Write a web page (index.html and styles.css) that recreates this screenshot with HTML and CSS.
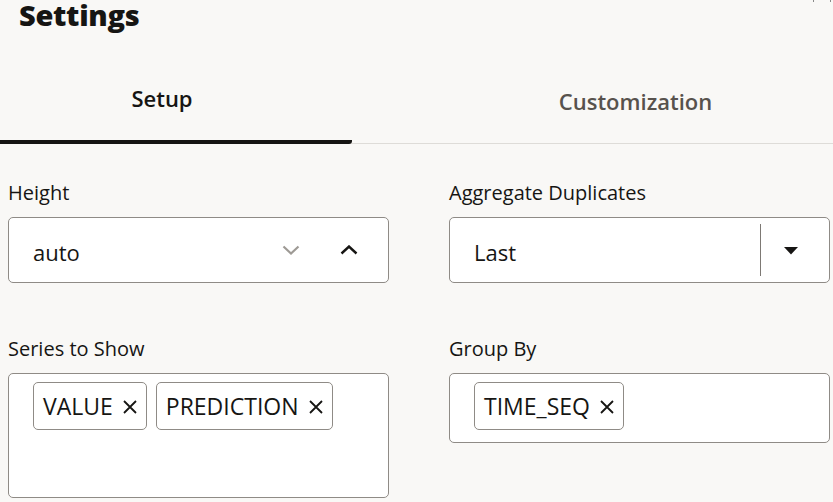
FILE: index.html
```html
<!DOCTYPE html>
<html lang="en">
<head>
    <meta name="viewport" content="width=device-width,initial-scale=1.0">
    <title>Settings</title>
    <link rel="stylesheet" href="styles.css">
</head>

<body>
    <div class="panel">
        <div class="panel-header">
            <h1 class="title">Settings</h1>
            <span class="close-mark"></span>
        </div>

        <div class="tabs">
            <div class="tab tab-setup active">Setup</div>
            <div class="tab tab-custom">Customization</div>
        </div>

        <div class="form-grid">
            <div class="field">
                <label class="field-label">Height</label>
                <div class="control">
                    <span class="control-value">auto</span>
                    <span class="spin">
                        <svg class="spin-icon muted" width="18" height="10" viewBox="0 0 18 10">
                            <path d="M1.5 1.5 L9 8.5 L16.5 1.5" fill="none" stroke="currentColor" stroke-width="2.2"/>
                        </svg>
                        <svg class="spin-icon" width="18" height="10" viewBox="0 0 18 10">
                            <path d="M1.5 8.5 L9 1.5 L16.5 8.5" fill="none" stroke="currentColor" stroke-width="2.4"/>
                        </svg>
                    </span>
                </div>
            </div>

            <div class="field">
                <label class="field-label">Aggregate Duplicates</label>
                <div class="control">
                    <span class="control-value">Last</span>
                    <span class="select-divider"></span>
                    <span class="caret">
                        <svg width="14" height="8" viewBox="0 0 14 8">
                            <path d="M0 0 H14 L7 7.5 Z" fill="currentColor"/>
                        </svg>
                    </span>
                </div>
            </div>

            <div class="field">
                <label class="field-label">Series to Show</label>
                <div class="control chips tall">
                    <span class="chip">VALUE
                        <svg class="chip-x" width="14" height="14" viewBox="0 0 14 14"><path d="M1 1 L13 13 M13 1 L1 13" stroke="currentColor" stroke-width="1.8"/></svg>
                    </span>
                    <span class="chip">PREDICTION
                        <svg class="chip-x" width="14" height="14" viewBox="0 0 14 14"><path d="M1 1 L13 13 M13 1 L1 13" stroke="currentColor" stroke-width="1.8"/></svg>
                    </span>
                </div>
            </div>

            <div class="field">
                <label class="field-label">Group By</label>
                <div class="control chips">
                    <span class="chip">TIME_SEQ
                        <svg class="chip-x" width="14" height="14" viewBox="0 0 14 14"><path d="M1 1 L13 13 M13 1 L1 13" stroke="currentColor" stroke-width="1.8"/></svg>
                    </span>
                </div>
            </div>
        </div>
    </div>
</body>

</html>
```

FILE: styles.css
```css
html {
    box-sizing: border-box;
}

*,
*:before,
*:after {
    box-sizing: inherit;
}

body {
    margin: 0;
    background: #f9f8f6;
    color: #161513;
    font-family: "Open Sans", "Noto Sans", sans-serif;
    overflow: hidden;
}

.panel-header {
    position: relative;
    height: 50px;
    padding: 0 0 0 19px;
}

.title {
    margin: 0;
    font-weight: 800;
    font-size: 29px;
    line-height: 29px;
    letter-spacing: -0.3px;
}

.close-mark {
    position: absolute;
    top: 0;
    right: 2px;
    width: 18px;
    height: 2px;
    border-left: 1px solid #888;
    border-right: 1px solid #888;
}

.tabs {
    display: flex;
    height: 94px;
    border-bottom: 1px solid #dedcd8;
}

.tab {
    display: flex;
    align-items: center;
    justify-content: center;
    font-size: 22px;
    font-weight: 600;
    color: #57524d;
    padding-top: 9px;
}

.tab-setup {
    width: 352px;
    padding-right: 28px;
}

.tab-custom {
    flex: 1;
    padding-left: 86px;
}

.tab.active {
    color: #161513;
    border-bottom: 4px solid #161513;
    border-bottom-right-radius: 3px;
    padding-top: 5px;
    margin-bottom: -1px;
}

.form-grid {
    display: grid;
    grid-template-columns: 381px 381px;
    align-items: start;
    column-gap: 60px;
    row-gap: 54px;
    padding: 37px 0 0 8px;
}

.field-label {
    display: block;
    font-size: 20px;
    font-weight: 500;
    line-height: 24px;
    margin-bottom: 12px;
}

.control {
    display: flex;
    align-items: center;
    height: 66px;
    padding: 0 0 0 24px;
    background: #fff;
    border: 1px solid #8f8b86;
    border-radius: 5px;
    font-size: 22px;
}

.control-value {
    flex: 1;
    padding-top: 4px;
}

.spin {
    display: flex;
    gap: 40px;
    padding-right: 30px;
}

.spin-icon {
    color: #161513;
}

.spin-icon.muted {
    color: #9e9a95;
}

.select-divider {
    width: 1px;
    height: 52px;
    background: #7d7974;
}

.caret {
    display: flex;
    width: 68px;
    justify-content: center;
    padding: 2px 8px 0 0;
}

.chips {
    align-items: flex-start;
    gap: 9px;
    height: 70px;
    padding-top: 8px;
}

.chips.tall {
    height: 125px;
}

.chip {
    display: inline-flex;
    align-items: center;
    gap: 10px;
    height: 48px;
    padding: 0 9px 0 9px;
    border: 1px solid #8f8b86;
    border-radius: 5px;
    font-size: 23px;
}

.chip-x {
    margin-top: 2px;
}
```
